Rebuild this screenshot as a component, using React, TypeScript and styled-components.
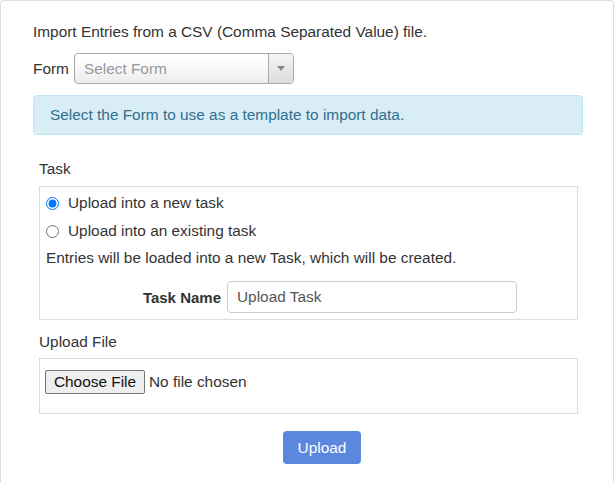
import styled, { createGlobalStyle } from "styled-components";

const GlobalStyle = createGlobalStyle`
  body {
    margin: 0;
    background: #fff;
    font-family: "Liberation Sans", Arial, sans-serif;
    font-size: 15.4px;
    color: #333;
  }
`;

const Panel = styled.div`
  box-sizing: border-box;
  width: 614px;
  min-height: 482px;
  border: 1px solid #ddd;
  border-bottom: none;
  border-radius: 4px 4px 0 0;
  padding: 21px 30px 0 32px;
`;

const Intro = styled.div`
  line-height: 20px;
`;

const FormRow = styled.div`
  display: flex;
  align-items: center;
  gap: 5px;
  margin-top: 11px;
  line-height: 20px;
`;

const Select = styled.div`
  box-sizing: border-box;
  display: flex;
  width: 220px;
  height: 31px;
  border: 1px solid #aaa;
  border-radius: 4px;
  background: linear-gradient(#fff 20%, #ececec);
  overflow: hidden;
`;

const SelectText = styled.div`
  flex: 1;
  padding-left: 9px;
  line-height: 29px;
  color: #999;
`;

const SelectArrow = styled.div`
  width: 24px;
  border-left: 1px solid #aaa;
  background: linear-gradient(#f4f4f4, #ddd);
  display: flex;
  align-items: center;
  justify-content: center;
`;

const Alert = styled.div`
  margin-top: 11px;
  padding: 9px 16px;
  line-height: 20px;
  background: #d9edf7;
  border: 1px solid #bce8f1;
  border-radius: 4px;
  color: #31708f;
`;

const Section = styled.div<{ $top: number }>`
  margin: ${(p) => p.$top}px 5px 0 6px;
`;

const SectionLabel = styled.div<{ $gap: number }>`
  line-height: 20px;
  margin-bottom: ${(p) => p.$gap}px;
`;

const Box = styled.div`
  border: 1px solid #ddd;
  padding: 2px 6px 6px 6px;
`;

const FileBox = styled.div`
  border: 1px solid #ddd;
  padding: 11px 5px 19px 5px;
  display: flex;
  align-items: center;
  gap: 4px;
`;

const RadioRow = styled.label`
  display: flex;
  align-items: center;
  gap: 9px;
  height: 28px;
`;

const Radio = styled.input`
  margin: 0;
  width: 13px;
  height: 13px;
`;

const Info = styled.div`
  height: 26px;
  line-height: 26px;
`;

const NameRow = styled.div`
  display: flex;
  align-items: center;
  gap: 6px;
  margin-top: 10px;
`;

const NameLabel = styled.label`
  width: 175px;
  text-align: right;
  font-weight: bold;
  font-size: 15px;
`;

const TextInput = styled.input`
  box-sizing: border-box;
  width: 290px;
  height: 32px;
  padding: 0 9px;
  border: 1px solid #ccc;
  border-radius: 4px;
  font-family: "Liberation Sans", Arial, sans-serif;
  font-size: 15.4px;
  color: #555;
`;

const FileButton = styled.button`
  box-sizing: border-box;
  width: 100px;
  height: 24px;
  padding: 0;
  border: 1px solid #767676;
  border-radius: 2px;
  background: #efefef;
  font-family: "Liberation Sans", Arial, sans-serif;
  font-size: 15.4px;
  color: #111;
`;

const ButtonRow = styled.div`
  display: flex;
  padding-left: 250px;
  margin-top: 17px;
`;

const UploadButton = styled.button`
  width: 78px;
  height: 33px;
  border: none;
  border-radius: 4px;
  background: #5b87de;
  color: #fff;
  font-family: "Liberation Sans", Arial, sans-serif;
  font-size: 15.4px;
`;

export default function App() {
  return (
    <>
      <GlobalStyle />
      <Panel>
        <Intro>Import Entries from a CSV (Comma Separated Value) file.</Intro>
        <FormRow>
          <span>Form</span>
          <Select>
            <SelectText>Select Form</SelectText>
            <SelectArrow>
              <svg width="8" height="5" viewBox="0 0 8 5">
                <path d="M0 0 L8 0 L4 5 Z" fill="#888" />
              </svg>
            </SelectArrow>
          </Select>
        </FormRow>
        <Alert>Select the Form to use as a template to import data.</Alert>

        <Section $top={24}>
          <SectionLabel $gap={7}>Task</SectionLabel>
          <Box>
            <RadioRow>
              <Radio type="radio" name="task" defaultChecked />
              Upload into a new task
            </RadioRow>
            <RadioRow>
              <Radio type="radio" name="task" />
              Upload into an existing task
            </RadioRow>
            <Info>Entries will be loaded into a new Task, which will be created.</Info>
            <NameRow>
              <NameLabel>Task Name</NameLabel>
              <TextInput defaultValue="Upload Task" />
            </NameRow>
          </Box>
        </Section>

        <Section $top={12}>
          <SectionLabel $gap={6}>Upload File</SectionLabel>
          <FileBox>
            <FileButton>Choose File</FileButton>
            <span>No file chosen</span>
          </FileBox>
        </Section>

        <ButtonRow>
          <UploadButton>Upload</UploadButton>
        </ButtonRow>
      </Panel>
    </>
  );
}
